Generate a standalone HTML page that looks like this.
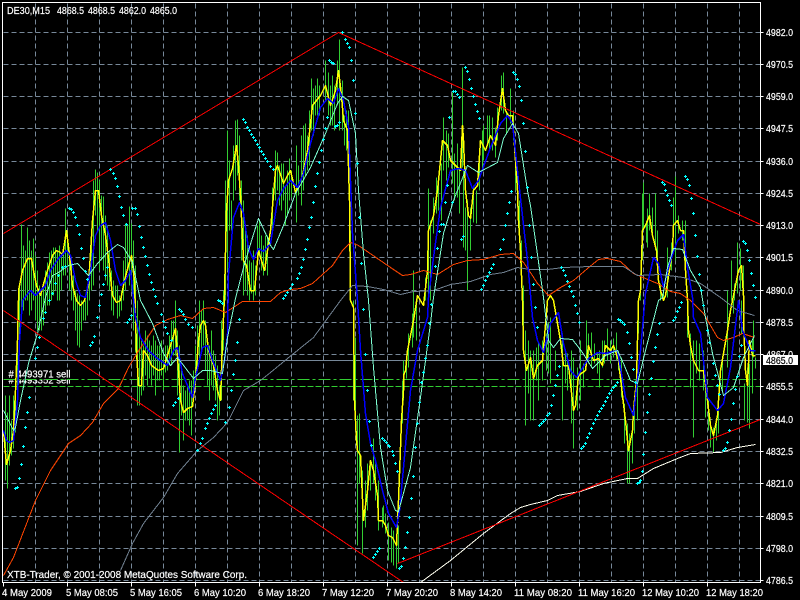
<!DOCTYPE html>
<html><head><meta charset="utf-8"><title>DE30,M15</title>
<style>
html,body{margin:0;padding:0;background:#000;width:800px;height:600px;overflow:hidden}
svg{display:block}
text{font-family:"Liberation Sans",sans-serif;font-size:10.5px;fill:#fff;stroke:#fff;stroke-width:.2}
.k{fill:#000;stroke:#000}
.l{fill:none;stroke-linejoin:round}
polyline,path{shape-rendering:crispEdges}
</style></head><body>
<svg width="800" height="600" viewBox="0 0 800 600" xmlns="http://www.w3.org/2000/svg">
<defs>
<marker id="p" markerUnits="userSpaceOnUse" markerWidth="4" markerHeight="4" refX="1.5" refY="1.5" overflow="visible"><path d="M0 1.5H3M1.5 0V3" stroke="#0ff" stroke-width="1" fill="none"/></marker>
</defs>
<rect width="800" height="600" fill="#000"/>
<g transform="translate(.5 .5)">
<!-- grid -->
<path fill="none" stroke="#778899" stroke-width="1" stroke-dasharray="5 3" d="M3 32H760M3 64H760M3 96H760M3 128H760M3 161H760M3 193H760M3 225H760M3 257H760M3 290H760M3 322H760M3 354H760M3 386H760M3 419H760M3 451H760M3 483H760M3 516H760M3 548H760M3 580H760M35 3V582M67 3V582M99 3V582M131 3V582M163 3V582M195 3V582M227 3V582M259 3V582M291 3V582M323 3V582M355 3V582M387 3V582M419 3V582M451 3V582M483 3V582M515 3V582M547 3V582M579 3V582M611 3V582M643 3V582M675 3V582M707 3V582M739 3V582"/>
<!-- order lines -->
<path fill="none" stroke="#778899" d="M3 360H760"/>
<text x="8" y="383" textLength="62" lengthAdjust="spacingAndGlyphs">#  4493352 sell</text>
<rect x="8" y="367" width="63" height="12" fill="#000"/>
<text x="8" y="377" textLength="62" lengthAdjust="spacingAndGlyphs">#  4493971 sell</text>
<path fill="none" stroke="#32cd32" stroke-dasharray="12 3 3 3" d="M3 379H760"/>
<path fill="none" stroke="#32cd32" stroke-dasharray="6 2" d="M3 386H760"/>
<!-- bars -->
<path fill="none" stroke="#32cd32" stroke-width="1" d="M5 395V480M7 412V488M9 395V465M11 420V455M13 395V448M15 390V432M17 345V400M19 283V340M21 224V315M23 245V310M25 250V300M27 227V300M29 240V315M31 250V310M33 238V300M35 255V320M37 270V330M39 285V330M41 288V330M43 288V325M45 270V310M47 262V305M49 252V305M51 250V300M53 247V295M55 247V290M57 250V300M59 245V300M61 255V290M63 248V275M65 208V275M67 232V265M69 250V290M71 260V300M73 275V310M75 290V330M77 293V345M79 295V347M81 300V330M83 300V320M85 300V320M87 290V315M89 280V300M91 230V290M93 180V285M95 169V215M97 172V230M99 180V270M101 195V260M103 196V270M105 215V280M107 225V285M109 250V290M111 270V310M113 280V315M115 285V300M117 285V318M119 295V316M121 290V310M123 260V300M125 223V290M127 225V270M129 206V285M131 223V290M133 240V330M135 265V352M137 300V405M139 320V405M141 340V395M143 345V390M145 330V375M147 335V385M149 340V378M151 345V385M153 335V375M155 340V395M157 345V380M159 345V380M161 340V375M163 350V390M165 345V372M167 345V370M169 335V365M171 320V365M173 320V355M175 300V355M177 330V395M179 345V452M181 370V415M183 385V440M185 390V420M187 385V420M189 380V425M191 380V435M193 370V400M195 345V380M197 325V370M199 300V360M201 310V350M203 300V345M205 320V370M207 340V385M209 345V400M211 330V385M213 350V390M215 355V400M217 365V420M219 385V415M221 320V400M223 290V350M225 180V300M227 130V270M229 160V230M231 200V230M233 145V200M235 120V190M237 119V175M239 135V200M241 180V260M243 200V295M245 225V290M247 235V295M249 260V300M251 262V293M253 250V300M255 265V295M257 225V260M259 220V255M261 235V270M263 245V275M265 235V270M267 235V275M272 187V230M275 150V200M277 152V190M279 165V205M281 163V210M283 163V200M285 185V225M287 170V215M289 158V200M291 170V197M296 145V222M298 165V195M301 135V205M303 125V190M305 123V175M307 135V170M309 110V165M311 78V130M313 88V135M315 85V115M317 78V115M319 85V115M325 60V100M328 72V115M330 85V125M332 75V125M334 85V130M337 60V105M339 39V130M342 80V130M344 115V145M346 110V150M348 110V150M350 230V270M353 300V400M355 337V423M357 415V545M359 413V483M362 470V553M365 480V527M367 463V510M370 465V490M373 438V483M375 463V500M378 480V530M382 507V527M383 505V523M385 513V533M388 522V560M391 527V562M393 530V565M396 533V568M398 525V562M402 380V423M403 360V400M406 357V378M408 333V367M412 313V347M413 270V337M416 300V340M425 277V300M428 188V300M430 220V300M433 197V233M436 177V213M438 177V210M441 163V220M443 117V170M446 130V180M448 133V167M452 92V183M454 153V200M457 143V197M459 167V213M462 67V167M463 170V247M465 207V250M467 200V290M470 207V250M473 185V222M476 190V223M479 160V190M482 130V170M483 125V160M487 115V143M489 115V150M492 117V150M495 127V157M497 107V140M501 75V110M503 72V113M506 112V133M510 88V123M513 110V140M515 150V190M517 167V207M519 200V240M521 240V280M523 285V350M525 330V425M528 340V393M530 350V420M533 350V420M536 347V380M538 343V400M542 340V380M546 333V370M548 322V373M550 317V383M555 350V370M562 333V420M565 350V383M567 353V390M571 350V423M573 357V448M577 367V410M580 340V400M583 363V387M586 320V360M588 333V363M591 332V367M594 343V363M597 353V373M599 350V387M602 340V367M604 340V363M607 328V360M610 340V363M613 338V357M616 332V360M618 350V370M621 357V397M624 403V443M627 423V483M629 433V483M632 427V463M634 410V433M637 377V420M638 300V333M640 273V300M642 193V260M643 182V230M646 220V242M647 208V247M649 193V230M652 207V233M655 193V250M657 230V263M660 283V300M663 290V300M667 247V297M671 242V270M673 197V230M675 176V260M678 215V233M682 220V240M685 220V263M687 300V337M690 333V387M693 340V437M696 340V373M699 343V380M703 350V390M705 390V417M708 400V430M710 420V447M713 427V452M716 423V440M718 410V433M722 357V390M727 290V367M731 260V300M733 300V313M734 283V300M737 242V293M740 248V290M741 300V333M743 265V300M744 383V420M747 367V422M749 363V428M752 340V393M753 320V357M755 357V368"/>
<!-- yellow -->
<polyline class="l" stroke="#ffff00" stroke-width="1.5" points="3,430 5,453 6,464 10,450 13,430 15,390 17,340 18,300 18,290 22,270 27,258 31,258 33,270 36,285 40,295 44,280 47,270 52,255 56,250 60,252 62,255 66,230 69,255 72,285 76,300 80,305 84,300 88,285 92,220 95,190 98,190 101,215 105,235 108,258 112,295 116,302 120,300 124,280 128,265 131,255 134,280 136,350 138,385 141,385 143,350 147,355 151,365 158,370 163,368 170,345 175,328 178,370 180,400 183,412 187,408 192,406 195,380 198,340 200,325 203,320 205,325 208,350 213,365 217,390 220,400 222,340 224,295 226,210 228,180 232,168 236,145 238,165 240,195 243,260 246,265 250,290 254,290 258,250 264,270 270,230 275,170 277,165 283,183 287,175 290,170 295,192 302,175 307,150 312,105 320,95 325,85 330,105 335,90 338,70 341,95 343,120 347,130 349,200 350,300 353,307 354,400 356,440 357,450 360,455 363,520 367,490 370,460 373,470 377,495 378,520 382,520 385,525 388,535 392,537 396,545 398,500 401,420 403,390 403,375 405,370 407,350 410,335 413,320 417,295 423,305 427,270 428,230 433,215 437,190 442,140 447,145 450,160 455,165 460,170 462,125 463,140 465,190 468,215 470,218 473,190 477,185 480,140 485,150 490,135 495,145 498,115 502,88 505,110 508,115 512,115 514,145 517,190 518,220 520,250 522,300 523,350 526,370 530,357 533,378 537,365 542,360 547,300 550,295 553,300 560,340 563,365 568,365 573,410 575,405 578,375 585,370 588,345 593,360 598,358 602,365 605,345 610,350 613,345 618,360 622,395 625,420 628,450 632,430 633,410 636,380 637,340 638,300 640,290 642,230 645,225 649,215 652,235 656,250 658,280 660,290 663,300 665,295 672,250 673,225 677,220 680,230 683,230 685,270 687,300 688,330 690,345 693,360 698,370 703,370 707,400 710,425 713,435 717,415 720,370 727,330 730,310 733,295 738,270 741,265 743,295 743,320 745,370 747,385 749,340 752,355 755,355"/>
<!-- orange -->
<polyline class="l" stroke="#ff4500" points="3,575 13,557 35,500 50,470 68,443 80,435 92,422 103,403 118,388 128,367 137,352 147,337 155,325 167,319 180,315 192,318 203,308 213,307 225,312 242,301 270,301 280,292 290,289 300,288 312,283 332,265 342,250 350,242 358,245 377,258 390,267 402,275 410,274 423,270 437,274 453,264 467,260 483,259 500,254 513,253 523,262 530,272 537,283 548,295 560,287 573,280 587,268 598,259 607,258 620,261 633,273 657,283 670,291 680,293 690,300 703,313 717,337 723,340 733,337 742,333 754,337"/>
<!-- slate -->
<polyline class="l" stroke="#708090" points="120,570 132,543 143,523 163,497 177,473 197,450 213,437 227,422 243,390 260,380 270,372 287,358 313,337 340,300 352,285 367,286 383,289 400,294 413,291 433,290 450,284 470,281 490,274 503,272 517,267 530,269 547,269 563,267 590,266 623,266 637,275 660,274 683,277 700,283 720,297 737,310 754,315"/>
<!-- white -->
<polyline class="l" stroke="#fffff0" points="420,582 450,560 483,533 510,513 520,507 530,504 547,500 557,495 580,491 603,483 627,478 637,478 653,468 677,458 690,453 720,452 737,447 755,444"/>
<!-- blue -->
<polyline class="l" stroke="#0000ff" stroke-width="1.5" points="3,430 6,440 9,442 13,440 17,400 19,340 22,300 30,290 35,295 40,290 45,285 50,270 58,258 66,250 70,255 75,280 80,295 85,297 90,270 95,235 100,225 105,222 110,240 115,270 120,285 125,280 130,270 135,317 140,337 148,350 157,358 167,365 173,350 177,347 182,373 192,397 195,377 202,347 207,345 212,360 220,380 224,360 227,333 228,273 233,217 239,202 243,213 248,248 253,259 258,248 263,251 270,243 277,200 283,188 290,180 297,187 303,173 310,143 320,107 327,98 333,103 338,88 343,100 348,127 352,233 357,300 360,350 365,413 370,443 375,460 382,490 388,513 396,527 399,510 403,467 410,390 417,350 427,317 428,297 433,257 440,207 450,170 458,168 465,170 472,188 478,180 490,147 500,123 507,115 512,123 518,180 527,260 532,317 537,340 543,352 550,323 558,312 563,343 570,370 576,377 588,358 597,352 605,353 617,350 625,397 633,415 640,350 645,293 653,257 658,263 663,287 670,260 677,240 683,234 687,267 692,297 693,317 700,333 707,397 717,410 723,403 730,367 738,300 742,330 750,350 755,350"/>
<!-- aqua -->
<polyline class="l" stroke="#7fffd4" points="3,410 8,420 13,430 15,427 20,400 28,363 37,333 45,297 52,275 58,272 68,265 77,263 88,275 97,263 107,252 117,244 123,247 132,262 140,300 152,323 163,353 170,365 177,357 193,378 202,370 210,370 222,373 227,337 235,298 243,267 252,237 258,218 267,237 270,245 273,249 283,225 295,193 310,167 325,133 337,103 342,96 348,100 355,133 358,190 363,253 368,300 373,367 380,447 387,490 395,510 398,511 410,467 420,397 430,323 433,297 443,233 453,200 467,165 478,172 497,162 503,138 512,123 518,133 527,190 530,205 535,240 543,297 548,340 553,347 560,338 572,339 582,352 592,368 605,355 617,350 623,363 630,380 637,383 645,350 658,300 662,297 667,267 673,248 682,249 690,270 700,287 705,317 712,353 723,395 733,387 743,357 754,335"/>
<!-- red -->
<path fill="none" stroke="#ff0000" d="M3 233L338 32L760 224M3 310L403 582M397 563L760 419"/>
<!-- SAR -->
<polyline fill="none" stroke="none" marker-start="url(#p)" marker-mid="url(#p)" marker-end="url(#p)" points="15,488 17,487 19,478 21,464 23,446 25,427 27,412 29,397 35,358 37,347 39,337 43,318 45,312 49,300 52,293 55,283 58,275 62,267 65,266 69,208 71,209 73,212 75,217 77,225 79,234 81,248 83,258 85,271 87,279 90,345 92,342 94,336 97,317 99,305 101,294 103,284 105,275 107,267 110,169 113,173 115,178 117,186 119,196 121,207 123,215 126,224 127,322 129,319 131,315 132,208 135,208 137,214 139,226 141,237 143,247 145,256 147,265 149,274 151,282 153,289 155,296 157,303 161,314 163,321 165,327 167,333 171,340 173,405 175,402 178,398 179,309 181,311 183,314 185,319 188,324 192,327 197,450 200,443 202,438 205,428 207,423 209,418 211,413 213,409 215,405 218,300 220,301 222,303 225,422 229,407 231,390 233,374 235,360 237,342 239,319 243,119 245,122 247,127 249,130 251,134 253,137 255,140 257,144 259,147 261,151 263,154 265,158 267,161 270,166 273,169 283,298 285,295 287,292 290,288 292,284 297,278 299,273 301,267 303,259 305,249 307,239 309,227 311,217 313,202 315,186 317,173 319,162 321,150 323,139 325,128 327,117 329,60 331,62 333,63 335,126 337,125 339,122 342,32 345,39 347,43 349,47 351,60 353,80 355,113 357,163 359,217 361,263 363,309 365,354 367,390 369,421 371,445 373,557 375,554 377,551 379,548 382,438 384,440 386,442 388,445 389,446 392,451 393,455 395,463 397,471 399,568 401,566 403,558 405,547 407,532 409,517 411,498 413,476 415,447 417,423 419,402 421,382 423,372 425,358 427,345 429,323 431,304 435,266 437,248 439,231 441,224 443,224 445,202 447,185 449,117 452,202 453,91 455,91 457,94 459,97 461,239 463,236 465,67 467,71 469,79 471,88 473,96 475,104 477,111 479,118 481,289 483,285 485,280 487,276 489,272 491,268 493,264 500,249 503,239 505,225 507,213 509,202 511,191 513,72 515,74 517,79 519,86 521,100 523,123 525,151 527,187 529,225 531,257 533,284 535,307 537,327 539,425 541,423 543,421 545,419 547,415 549,413 551,405 553,395 555,385 557,375 559,366 561,267 563,270 565,275 567,281 569,286 571,291 573,296 575,305 577,313 579,322 581,448 583,446 585,443 587,437 589,433 591,428 593,423 595,419 597,415 599,411 601,408 603,405 605,401 607,397 609,393 611,390 613,387 615,385 617,382 618,319 620,320 622,322 624,324 627,332 629,343 631,357 633,369 635,382 637,483 639,482 640,480 642,471 643,454 645,432 647,412 649,394 651,378 653,361 655,347 657,334 659,323 662,182 664,184 665,190 667,195 669,200 671,205 673,320 675,317 677,311 679,307 681,302 685,176 687,179 689,185 691,198 693,213 695,235 697,256 699,274 701,290 703,305 707,330 709,342 713,363 715,375 717,385 719,394 723,450 725,448 727,442 729,430 731,419 733,403 735,389 737,376 739,356 741,345 743,241 745,243 747,250 749,260 751,273 753,285 755,297"/>
<!-- frame and ticks -->
<path fill="none" stroke="#fff" d="M2 2H760V582H2ZM3 582V586M67 582V586M131 582V586M195 582V586M259 582V586M323 582V586M387 582V586M451 582V586M515 582V586M579 582V586M643 582V586M707 582V586M760 32H763M760 64H763M760 96H763M760 128H763M760 161H763M760 193H763M760 225H763M760 257H763M760 290H763M760 322H763M760 354H763M760 386H763M760 419H763M760 451H763M760 483H763M760 516H763M760 548H763M760 580H763"/>
</g>
<text x="7" y="14" textLength="43" lengthAdjust="spacingAndGlyphs">DE30,M15</text>
<text x="57" y="14" textLength="27" lengthAdjust="spacingAndGlyphs">4868.5</text>
<text x="88" y="14" textLength="27" lengthAdjust="spacingAndGlyphs">4868.5</text>
<text x="119" y="14" textLength="27" lengthAdjust="spacingAndGlyphs">4862.0</text>
<text x="150" y="14" textLength="27" lengthAdjust="spacingAndGlyphs">4865.0</text>
<text x="7" y="578" textLength="240" lengthAdjust="spacingAndGlyphs">XTB-Trader, © 2001-2008 MetaQuotes Software Corp.</text>
<!-- price axis -->
<g>
<text x="766" y="36" textLength="27" lengthAdjust="spacingAndGlyphs">4982.0</text>
<text x="766" y="68" textLength="27" lengthAdjust="spacingAndGlyphs">4970.5</text>
<text x="766" y="100" textLength="27" lengthAdjust="spacingAndGlyphs">4959.0</text>
<text x="766" y="132" textLength="27" lengthAdjust="spacingAndGlyphs">4947.5</text>
<text x="766" y="165" textLength="27" lengthAdjust="spacingAndGlyphs">4936.0</text>
<text x="766" y="197" textLength="27" lengthAdjust="spacingAndGlyphs">4924.5</text>
<text x="766" y="229" textLength="27" lengthAdjust="spacingAndGlyphs">4913.0</text>
<text x="766" y="261" textLength="27" lengthAdjust="spacingAndGlyphs">4901.5</text>
<text x="766" y="294" textLength="27" lengthAdjust="spacingAndGlyphs">4890.0</text>
<text x="766" y="326" textLength="27" lengthAdjust="spacingAndGlyphs">4878.5</text>
<text x="766" y="358" textLength="27" lengthAdjust="spacingAndGlyphs">4867.0</text>
<text x="766" y="390" textLength="27" lengthAdjust="spacingAndGlyphs">4855.5</text>
<text x="766" y="423" textLength="27" lengthAdjust="spacingAndGlyphs">4844.0</text>
<text x="766" y="455" textLength="27" lengthAdjust="spacingAndGlyphs">4832.5</text>
<text x="766" y="487" textLength="27" lengthAdjust="spacingAndGlyphs">4821.0</text>
<text x="766" y="520" textLength="27" lengthAdjust="spacingAndGlyphs">4809.5</text>
<text x="766" y="552" textLength="27" lengthAdjust="spacingAndGlyphs">4798.0</text>
<text x="766" y="584" textLength="27" lengthAdjust="spacingAndGlyphs">4786.5</text>
<rect x="763" y="355" width="35" height="10" fill="#fff"/>
<text class="k" x="766" y="364" textLength="27" lengthAdjust="spacingAndGlyphs">4865.0</text>
</g>
<!-- time axis -->
<text x="2" y="596" textLength="50" lengthAdjust="spacingAndGlyphs">4 May 2009</text>
<text x="66" y="596" textLength="52" lengthAdjust="spacingAndGlyphs">5 May 08:05</text>
<text x="130" y="596" textLength="52" lengthAdjust="spacingAndGlyphs">5 May 16:05</text>
<text x="194" y="596" textLength="52" lengthAdjust="spacingAndGlyphs">6 May 10:20</text>
<text x="258" y="596" textLength="52" lengthAdjust="spacingAndGlyphs">6 May 18:20</text>
<text x="322" y="596" textLength="52" lengthAdjust="spacingAndGlyphs">7 May 12:20</text>
<text x="386" y="596" textLength="52" lengthAdjust="spacingAndGlyphs">7 May 20:20</text>
<text x="450" y="596" textLength="52" lengthAdjust="spacingAndGlyphs">8 May 14:20</text>
<text x="514" y="596" textLength="58" lengthAdjust="spacingAndGlyphs">11 May 08:20</text>
<text x="578" y="596" textLength="57" lengthAdjust="spacingAndGlyphs">11 May 16:20</text>
<text x="642" y="596" textLength="57" lengthAdjust="spacingAndGlyphs">12 May 10:20</text>
<text x="706" y="596" textLength="57" lengthAdjust="spacingAndGlyphs">12 May 18:20</text>
</svg>
</body></html>
